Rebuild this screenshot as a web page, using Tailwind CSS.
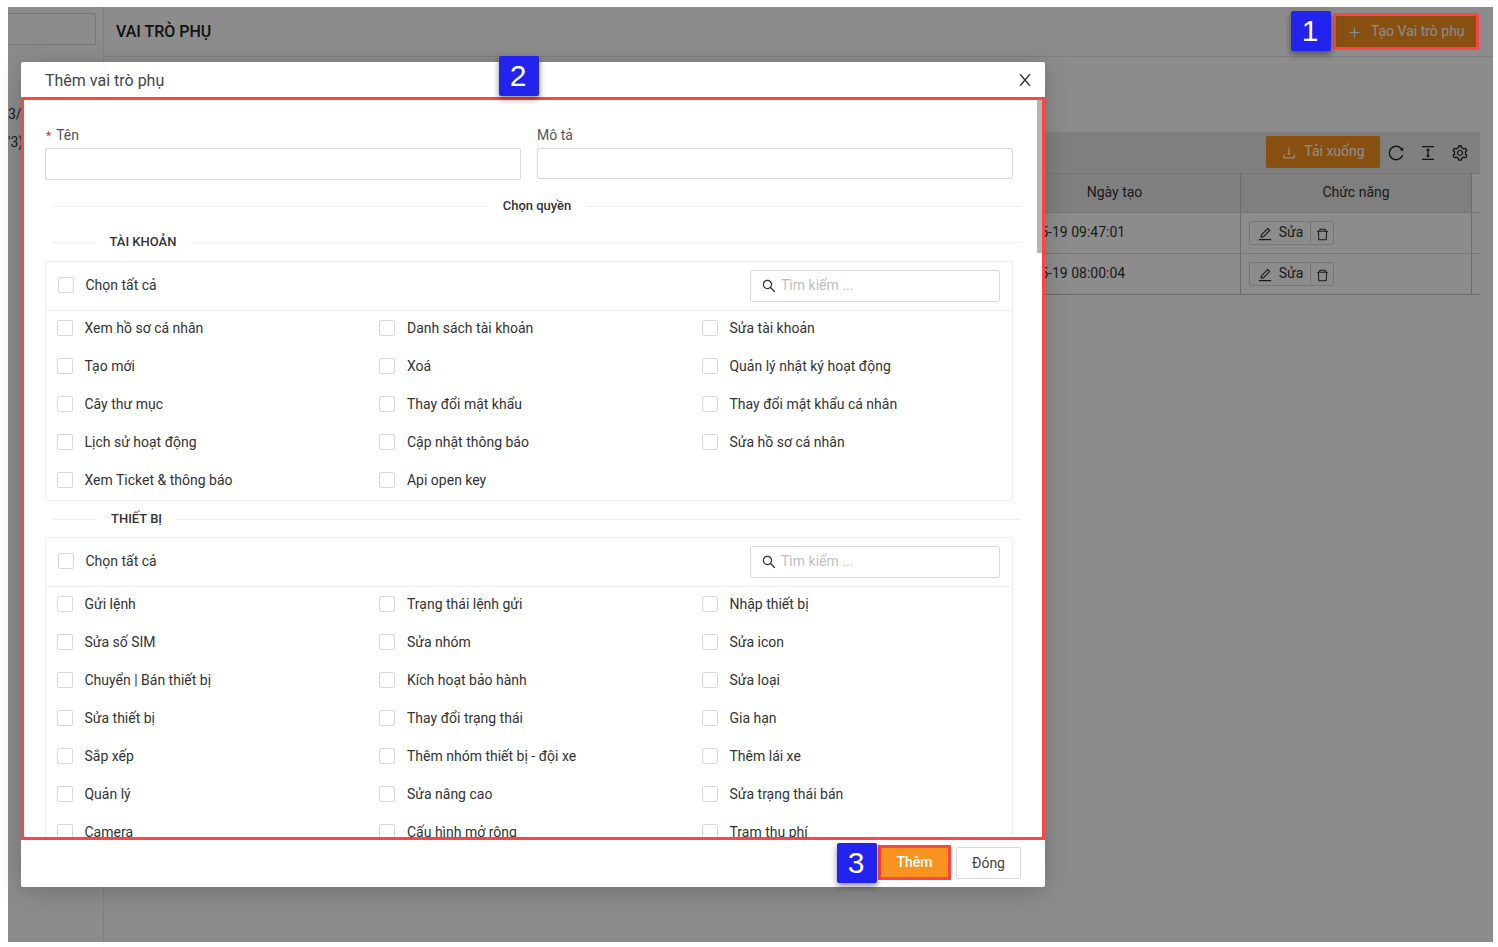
<!DOCTYPE html>
<html lang="vi">
<head>
<meta charset="utf-8">
<title>Vai trò phụ</title>
<script src="https://cdn.jsdelivr.net/npm/@tailwindcss/browser@4"></script>
</head>
<body class="bg-white font-['Roboto',sans-serif] text-[14px] text-[#333]">
<div class="relative w-[1498px] h-[947px] overflow-hidden">
  <!-- page behind -->
  <div class="absolute left-[8px] top-[7px] w-[1485px] h-[935px] bg-white flex overflow-hidden">
    <aside class="w-[96px] shrink-0 border-r border-[#e8e8e8] relative">
      <div class="h-[32px] mt-[6px] w-[88px] border border-[#d9d9d9] border-l-0 rounded-r-[2px]"></div>
      <div class="mt-[55px] h-[28px] leading-[28px] text-[#333] whitespace-nowrap">3/</div>
      <div class="h-[28px] leading-[28px] text-[#333] whitespace-nowrap">'3)</div>
    </aside>
    <main class="flex-1 min-w-0">
      <header class="h-[50px] border-b border-[#e8e8e8] flex items-center justify-between pl-[12px] pr-[14px]">
        <h1 class="text-[16px] font-medium text-[#222]">VAI TRÒ PHỤ</h1>
        <button class="w-[146px] h-[37px] bg-[#f7931e] text-white flex items-center justify-center gap-[8.5px] text-[14px]">
          <svg class="w-[15px] h-[15px] mt-[1px]" viewBox="0 0 1024 1024" fill="currentColor"><path d="M482 152h60q8 0 8 8v704q0 8-8 8h-60q-8 0-8-8V160q0-8 8-8z"/><path d="M176 474h672q8 0 8 8v60q0 8-8 8H176q-8 0-8-8v-60q0-8 8-8z"/></svg>
          <span>Tạo Vai trò phụ</span>
        </button>
      </header>
      <section class="ml-[16px] mr-[13px] mt-[75px]">
        <div class="h-[41px] bg-[#e7e7e7] flex items-center justify-end pr-[11px] pb-[1px]">
          <button class="w-[114px] h-[32px] -mt-[1px] bg-[#f7931e] text-white rounded-[2px] flex items-center justify-center gap-[7px] mr-[7px]">
            <svg class="w-[16px] h-[16px] mt-[2px]" viewBox="0 0 1024 1024" fill="currentColor"><path d="M505.7 661a8 8 0 0 0 12.6 0l112-141.7c4.1-5.2.4-12.9-6.3-12.9h-74.1V168c0-4.4-3.6-8-8-8h-60c-4.4 0-8 3.6-8 8v338.3H400c-6.7 0-10.4 7.7-6.3 12.9l112 141.8zM878 626h-60c-4.4 0-8 3.6-8 8v154H214V634c0-4.4-3.6-8-8-8h-60c-4.4 0-8 3.6-8 8v198c0 17.7 14.3 32 32 32h684c17.7 0 32-14.3 32-32V634c0-4.4-3.6-8-8-8z"/></svg>
            <span>Tải xuống</span>
          </button>
          <svg class="w-[18px] h-[18px] mr-[14px] mt-[1px]" viewBox="0 0 1024 1024" fill="#222"><path d="M909.1 209.3l-56.4 44.1C775.8 155.1 656.2 92 521.9 92 290 92 102.3 279.5 102 511.5 101.7 743.7 289.8 932 521.9 932c181.3 0 335.8-115 394.6-276.1 1.5-4.2-.7-8.9-4.9-10.3l-56.7-19.5a8 8 0 0 0-10.1 4.8c-1.8 5-3.8 10-5.9 14.9-17.3 41-42.1 77.8-73.7 109.4A344.77 344.77 0 0 1 655.9 829c-42.3 17.9-87.4 27-133.8 27-46.5 0-91.5-9.1-133.8-27A341.5 341.5 0 0 1 279 755.2a342.16 342.16 0 0 1-73.7-109.4c-17.9-42.4-27-87.4-27-133.9s9.1-91.5 27-133.9c17.3-41 42.1-77.8 73.7-109.4 31.6-31.6 68.4-56.4 109.3-73.8 42.3-17.9 87.4-27 133.8-27 46.5 0 91.5 9.1 133.8 27a341.5 341.5 0 0 1 109.3 73.8c9.9 9.9 19.2 20.4 27.8 31.4l-60.2 47a8 8 0 0 0 3 14.1l175.6 43c5 1.2 9.9-2.6 9.9-7.7l.8-180.9c-.1-6.6-7.8-10.3-13-6.2z"/></svg>
          <svg class="w-[18px] h-[18px] mr-[14px] mt-[1px]" viewBox="0 0 1024 1024" fill="#222"><path d="M840 836H184c-4.4 0-8 3.6-8 8v60c0 4.4 3.6 8 8 8h656c4.4 0 8-3.6 8-8v-60c0-4.4-3.6-8-8-8zm0-724H184c-4.4 0-8 3.6-8 8v60c0 4.4 3.6 8 8 8h656c4.4 0 8-3.6 8-8v-60c0-4.4-3.6-8-8-8zM610.8 378c6 0 9.4-7 5.7-11.7L515.7 238.7a7.14 7.14 0 0 0-11.3 0L403.6 366.3a7.23 7.23 0 0 0 5.7 11.7H476v268h-62.8c-6 0-9.4 7-5.7 11.7l100.8 127.5c2.9 3.7 8.5 3.7 11.3 0l100.8-127.5c3.7-4.7.4-11.7-5.7-11.7H548V378h62.8z"/></svg>
          <svg class="w-[18px] h-[18px] mt-[1px]" viewBox="0 0 1024 1024" fill="#222"><path d="M924.8 625.7l-65.5-56c3.1-19 4.7-38.4 4.7-57.8s-1.6-38.8-4.7-57.8l65.5-56a32.03 32.03 0 0 0 9.3-35.2l-.9-2.6a443.74 443.74 0 0 0-79.7-137.9l-1.8-2.1a32.12 32.12 0 0 0-35.1-9.5l-81.3 28.9c-30-24.6-63.5-44-99.7-57.6l-15.7-85a32.05 32.05 0 0 0-25.8-25.7l-2.7-.5c-52.1-9.4-106.9-9.4-159 0l-2.7.5a32.05 32.05 0 0 0-25.8 25.7l-15.8 85.4a351.86 351.86 0 0 0-99 57.4l-81.9-29.1a32 32 0 0 0-35.1 9.5l-1.8 2.1a446.02 446.02 0 0 0-79.7 137.9l-.9 2.6c-4.5 12.5-.8 26.5 9.3 35.2l66.3 56.6c-3.1 18.8-4.6 38-4.6 57.1 0 19.2 1.5 38.4 4.6 57.1L99 625.5a32.03 32.03 0 0 0-9.3 35.2l.9 2.6c18.1 50.4 44.9 96.9 79.7 137.9l1.8 2.1a32.12 32.12 0 0 0 35.1 9.5l81.9-29.1c29.8 24.5 63.1 43.9 99 57.4l15.8 85.4a32.05 32.05 0 0 0 25.8 25.7l2.7.5a449.4 449.4 0 0 0 159 0l2.7-.5a32.05 32.05 0 0 0 25.8-25.7l15.7-85a350 350 0 0 0 99.7-57.6l81.3 28.9a32 32 0 0 0 35.1-9.5l1.8-2.1c34.8-41.1 61.6-87.5 79.7-137.9l.9-2.6c4.5-12.3.8-26.3-9.3-35zM788.3 465.9c2.5 15.1 3.8 30.6 3.8 46.1s-1.3 31-3.8 46.1l-6.6 40.1 74.7 63.9a370.03 370.03 0 0 1-42.6 73.6L721 702.8l-31.4 25.8c-23.9 19.6-50.5 35-79.3 45.8l-38.1 14.3-17.9 97a377.5 377.5 0 0 1-85 0l-17.9-97.2-37.8-14.5c-28.5-10.8-55-26.2-78.7-45.7l-31.4-25.9-93.4 33.2c-17-22.9-31.2-47.6-42.6-73.6l75.5-64.5-6.5-40c-2.4-14.9-3.7-30.3-3.7-45.5 0-15.3 1.2-30.6 3.7-45.5l6.5-40-75.5-64.5c11.3-26.1 25.6-50.7 42.6-73.6l93.4 33.2 31.4-25.9c23.7-19.5 50.2-34.9 78.7-45.7l37.9-14.3 17.9-97.2c28.1-3.2 56.8-3.2 85 0l17.9 97 38.1 14.3c28.7 10.8 55.4 26.2 79.3 45.8l31.4 25.8 92.8-32.9c17 22.9 31.2 47.6 42.6 73.6L781.8 426l6.5 39.9zM512 326c-97.2 0-176 78.8-176 176s78.8 176 176 176 176-78.8 176-176-78.8-176-176-176zm79.2 255.2A111.6 111.6 0 0 1 512 614c-29.9 0-58-11.7-79.2-32.8A111.6 111.6 0 0 1 400 502c0-29.9 11.7-58 32.8-79.2C454 401.6 482.1 390 512 390c29.9 0 58 11.6 79.2 32.8A111.6 111.6 0 0 1 624 502c0 29.9-11.7 58-32.8 79.2z"/></svg>
        </div>
        <div class="border-b border-[#c4c4c4]">
          <div class="grid grid-cols-[1fr_252px_231px_8px] h-[40px] border-y border-[#d8d8d8]">
            <div class="bg-[#e7e7e7]"></div>
            <div class="bg-[#e7e7e7] border-r border-[#c4c4c4] flex items-center justify-center text-[#333] pb-[2px]">Ngày tạo</div>
            <div class="bg-[#e7e7e7] border-r border-[#c4c4c4] flex items-center justify-center text-[#333] pb-[2px]">Chức năng</div>
            <div></div>
          </div>
          <div class="grid grid-cols-[1fr_252px_231px_8px] h-[41px] border-b border-[#d8d8d8]">
            <div></div>
            <div class="border-r border-[#c4c4c4] flex items-center pl-[8px] pb-[2px] text-[#333]">2022-05-19 09:47:01</div>
            <div class="border-r border-[#c4c4c4] flex items-center pl-[8px]">
              <div class="flex h-[24px] border border-[#d9d9d9] rounded-[2px]">
                <span class="w-[61px] border-r border-[#d9d9d9] flex items-center justify-center gap-[6px]"><svg class="w-[16px] h-[16px] mt-[2px]" viewBox="0 0 1024 1024" fill="#333"><path d="M257.7 752c2 0 4-.2 6-.5L431.9 722c2-.4 3.9-1.3 5.3-2.8l423.9-423.9a9.96 9.96 0 0 0 0-14.1L694.9 114.9c-1.9-1.9-4.4-2.9-7.1-2.9s-5.2 1-7.1 2.9L256.8 538.8c-1.5 1.5-2.4 3.3-2.8 5.3l-29.5 168.2a33.5 33.5 0 0 0 9.4 29.8c6.6 6.4 14.9 9.9 23.8 9.9zm67.4-174.4L687.8 215l73.3 73.3-362.7 362.6-88.9 15.7 15.6-89zM880 836H144c-17.7 0-32 14.3-32 32v36c0 4.4 3.6 8 8 8h784c4.4 0 8-3.6 8-8v-36c0-17.7-14.3-32-32-32z"/></svg><span class="-mt-[1px]">Sửa</span></span>
                <span class="w-[22px] flex items-center justify-center"><svg class="w-[15px] h-[15px] mt-[2px]" viewBox="0 0 1024 1024" fill="#333"><path d="M360 184h-8c4.4 0 8-3.6 8-8v8h304v-8c0 4.4 3.6 8 8 8h-8v72h72v-80c0-35.3-28.7-64-64-64H352c-35.3 0-64 28.7-64 64v80h72v-72zm504 72H160c-17.7 0-32 14.3-32 32v32c0 4.4 3.6 8 8 8h60.4l24.7 523c1.6 34.1 29.8 61 63.9 61h454c34.2 0 62.3-26.8 63.9-61l24.7-523H888c4.4 0 8-3.6 8-8v-32c0-17.7-14.3-32-32-32zM731.3 840H292.7l-24.2-512h487l-24.2 512z"/></svg></span>
              </div>
            </div>
            <div></div>
          </div>
          <div class="grid grid-cols-[1fr_252px_231px_8px] h-[40px]">
            <div></div>
            <div class="border-r border-[#c4c4c4] flex items-center pl-[8px] pb-[2px] text-[#333]">2022-05-19 08:00:04</div>
            <div class="border-r border-[#c4c4c4] flex items-center pl-[8px]">
              <div class="flex h-[24px] border border-[#d9d9d9] rounded-[2px]">
                <span class="w-[61px] border-r border-[#d9d9d9] flex items-center justify-center gap-[6px]"><svg class="w-[16px] h-[16px] mt-[2px]" viewBox="0 0 1024 1024" fill="#333"><path d="M257.7 752c2 0 4-.2 6-.5L431.9 722c2-.4 3.9-1.3 5.3-2.8l423.9-423.9a9.96 9.96 0 0 0 0-14.1L694.9 114.9c-1.9-1.9-4.4-2.9-7.1-2.9s-5.2 1-7.1 2.9L256.8 538.8c-1.5 1.5-2.4 3.3-2.8 5.3l-29.5 168.2a33.5 33.5 0 0 0 9.4 29.8c6.6 6.4 14.9 9.9 23.8 9.9zm67.4-174.4L687.8 215l73.3 73.3-362.7 362.6-88.9 15.7 15.6-89zM880 836H144c-17.7 0-32 14.3-32 32v36c0 4.4 3.6 8 8 8h784c4.4 0 8-3.6 8-8v-36c0-17.7-14.3-32-32-32z"/></svg><span class="-mt-[1px]">Sửa</span></span>
                <span class="w-[22px] flex items-center justify-center"><svg class="w-[15px] h-[15px] mt-[2px]" viewBox="0 0 1024 1024" fill="#333"><path d="M360 184h-8c4.4 0 8-3.6 8-8v8h304v-8c0 4.4 3.6 8 8 8h-8v72h72v-80c0-35.3-28.7-64-64-64H352c-35.3 0-64 28.7-64 64v80h72v-72zm504 72H160c-17.7 0-32 14.3-32 32v32c0 4.4 3.6 8 8 8h60.4l24.7 523c1.6 34.1 29.8 61 63.9 61h454c34.2 0 62.3-26.8 63.9-61l24.7-523H888c4.4 0 8-3.6 8-8v-32c0-17.7-14.3-32-32-32zM731.3 840H292.7l-24.2-512h487l-24.2 512z"/></svg></span>
              </div>
            </div>
            <div></div>
          </div>
        </div>
      </section>
    </main>
    <div class="absolute inset-0 bg-black/45"></div>
  </div>

  <!-- modal -->
  <div class="absolute left-[21px] top-[62px] w-[1024px] h-[825px] bg-white rounded-[2px] flex flex-col shadow-[0_4px_24px_rgba(0,0,0,0.2)]">
    <div class="h-[35px] shrink-0 pl-[24px] pr-[11px] flex items-center justify-between">
      <h2 class="text-[16px] text-[#444] mt-[2px]">Thêm vai trò phụ</h2>
      <svg class="w-[18px] h-[18px] mt-[1px]" viewBox="0 0 1024 1024" fill="#333"><path d="M563.8 512l262.5-312.9c4.4-5.2.7-13.1-6.1-13.1h-79.8c-4.7 0-9.2 2.1-12.3 5.7L511.6 449.8 295.1 191.7c-3-3.6-7.5-5.7-12.3-5.7H203c-6.8 0-10.5 7.9-6.1 13.1L459.4 512 196.9 824.9A7.95 7.95 0 0 0 203 838h79.8c4.7 0 9.2-2.1 12.3-5.7l216.5-258.1 216.5 258.1c3 3.6 7.5 5.7 12.3 5.7h79.8c6.8 0 10.5-7.9 6.1-13.1L563.8 512z"/></svg>
    </div>
    <div class="relative h-[743px] shrink-0 overflow-hidden">
      <div class="absolute right-[2px] top-[3px] w-[6px] h-[153px] bg-[#b5b5b5]"></div>
      <div class="pl-[24px] pt-[27px]">
        <div class="grid grid-cols-[476px_476px] gap-x-[16px] text-[#555]">
          <div>
            <div class="h-[24px] leading-[22px]"><span class="text-[#f5222d] text-[12px] mr-[5px] ml-[1px]">*</span>Tên</div>
            <div class="h-[32px] border border-[#d9d9d9] rounded-[2px]"></div>
          </div>
          <div>
            <div class="h-[24px] leading-[22px]">Mô tả</div>
            <div class="h-[31px] border border-[#d9d9d9] rounded-[2px]"></div>
          </div>
        </div>
        <div class="mt-[16px] ml-[8px] w-[968px] h-[20px] flex items-center gap-[16px]">
          <div class="flex-1 h-px bg-[#efefef]"></div>
          <div class="text-[13px] font-medium text-[#333]">Chọn quyền</div>
          <div class="flex-1 h-px bg-[#efefef]"></div>
        </div>

        <div class="mt-[16px] ml-[8px] w-[968px] h-[20px] flex items-center gap-[13.5px]">
          <div class="w-[43px] h-px bg-[#efefef]"></div>
          <div class="text-[13px] font-medium text-[#333]">TÀI KHOẢN</div>
          <div class="flex-1 h-px bg-[#efefef]"></div>
        </div>
        <div class="mt-[9px] w-[968px] border border-[#eeeeee] rounded-[2px] pb-[3px]">
          <div class="h-[49px] border-b border-[#eeeeee] flex items-center justify-between pl-[12px] pr-[12px]">
            <label class="flex items-center gap-[11.5px] -mt-[3px]"><span class="w-[16px] h-[16px] border border-[#d9d9d9] rounded-[2px]"></span><span class="mt-[2px]">Chọn tất cả</span></label>
            <div class="w-[250px] h-[32px] border border-[#d9d9d9] rounded-[2px] flex items-center pl-[10px] gap-[4px] text-[#bfbfbf]">
              <svg class="w-[16px] h-[16px]" viewBox="0 0 1024 1024" fill="#333"><path d="M909.6 854.5L649.9 594.8C690.2 542.7 712 479 712 412c0-80.2-31.3-155.4-87.9-212.1-56.6-56.7-132-87.9-212.1-87.9s-155.5 31.3-212.1 87.9C143.2 256.5 112 331.8 112 412c0 80.1 31.3 155.5 87.9 212.1C256.5 680.8 331.8 712 412 712c67 0 130.6-21.8 182.7-62l259.7 259.6a8.2 8.2 0 0 0 11.6 0l43.6-43.5a8.2 8.2 0 0 0 0-11.6zM570.4 570.4C528 612.7 471.8 636 412 636s-116-23.3-158.4-65.6C211.3 528 188 471.8 188 412s23.3-116 65.6-158.4C296 211.3 352.2 188 412 188s116 23.2 158.4 65.6S636 352.2 636 412s-23.3 116-65.6 158.4z"/></svg>
              <span class="-mt-[2px]">Tìm kiếm ...</span>
            </div>
          </div>
          <div class="grid grid-cols-[322.5px_322.5px_1fr] gap-y-[4px] pl-[10.8px]">
            <label class="h-[34px] flex items-center gap-[11.7px]"><span class="w-[16px] h-[16px] border border-[#d9d9d9] rounded-[2px]"></span><span>Xem hồ sơ cá nhân</span></label>
            <label class="h-[34px] flex items-center gap-[11.7px]"><span class="w-[16px] h-[16px] border border-[#d9d9d9] rounded-[2px]"></span><span>Danh sách tài khoản</span></label>
            <label class="h-[34px] flex items-center gap-[11.7px]"><span class="w-[16px] h-[16px] border border-[#d9d9d9] rounded-[2px]"></span><span>Sửa tài khoản</span></label>
            <label class="h-[34px] flex items-center gap-[11.7px]"><span class="w-[16px] h-[16px] border border-[#d9d9d9] rounded-[2px]"></span><span>Tạo mới</span></label>
            <label class="h-[34px] flex items-center gap-[11.7px]"><span class="w-[16px] h-[16px] border border-[#d9d9d9] rounded-[2px]"></span><span>Xoá</span></label>
            <label class="h-[34px] flex items-center gap-[11.7px]"><span class="w-[16px] h-[16px] border border-[#d9d9d9] rounded-[2px]"></span><span>Quản lý nhật ký hoạt động</span></label>
            <label class="h-[34px] flex items-center gap-[11.7px]"><span class="w-[16px] h-[16px] border border-[#d9d9d9] rounded-[2px]"></span><span>Cây thư mục</span></label>
            <label class="h-[34px] flex items-center gap-[11.7px]"><span class="w-[16px] h-[16px] border border-[#d9d9d9] rounded-[2px]"></span><span>Thay đổi mật khẩu</span></label>
            <label class="h-[34px] flex items-center gap-[11.7px]"><span class="w-[16px] h-[16px] border border-[#d9d9d9] rounded-[2px]"></span><span>Thay đổi mật khẩu cá nhân</span></label>
            <label class="h-[34px] flex items-center gap-[11.7px]"><span class="w-[16px] h-[16px] border border-[#d9d9d9] rounded-[2px]"></span><span>Lịch sử hoạt động</span></label>
            <label class="h-[34px] flex items-center gap-[11.7px]"><span class="w-[16px] h-[16px] border border-[#d9d9d9] rounded-[2px]"></span><span>Cập nhật thông báo</span></label>
            <label class="h-[34px] flex items-center gap-[11.7px]"><span class="w-[16px] h-[16px] border border-[#d9d9d9] rounded-[2px]"></span><span>Sửa hồ sơ cá nhân</span></label>
            <label class="h-[34px] flex items-center gap-[11.7px]"><span class="w-[16px] h-[16px] border border-[#d9d9d9] rounded-[2px]"></span><span>Xem Ticket &amp; thông báo</span></label>
            <label class="h-[34px] flex items-center gap-[11.7px]"><span class="w-[16px] h-[16px] border border-[#d9d9d9] rounded-[2px]"></span><span>Api open key</span></label>
          </div>
        </div>

        <div class="mt-[8px] ml-[8px] w-[968px] h-[20px] flex items-center gap-[14px]">
          <div class="w-[44px] h-px bg-[#efefef]"></div>
          <div class="text-[13px] font-medium text-[#333]">THIẾT BỊ</div>
          <div class="flex-1 h-px bg-[#efefef]"></div>
        </div>
        <div class="mt-[8px] w-[968px] border border-[#eeeeee] rounded-[2px] pb-[3px]">
          <div class="h-[49px] border-b border-[#eeeeee] flex items-center justify-between pl-[12px] pr-[12px]">
            <label class="flex items-center gap-[11.5px] -mt-[3px]"><span class="w-[16px] h-[16px] border border-[#d9d9d9] rounded-[2px]"></span><span class="mt-[2px]">Chọn tất cả</span></label>
            <div class="w-[250px] h-[32px] border border-[#d9d9d9] rounded-[2px] flex items-center pl-[10px] gap-[4px] text-[#bfbfbf]">
              <svg class="w-[16px] h-[16px]" viewBox="0 0 1024 1024" fill="#333"><path d="M909.6 854.5L649.9 594.8C690.2 542.7 712 479 712 412c0-80.2-31.3-155.4-87.9-212.1-56.6-56.7-132-87.9-212.1-87.9s-155.5 31.3-212.1 87.9C143.2 256.5 112 331.8 112 412c0 80.1 31.3 155.5 87.9 212.1C256.5 680.8 331.8 712 412 712c67 0 130.6-21.8 182.7-62l259.7 259.6a8.2 8.2 0 0 0 11.6 0l43.6-43.5a8.2 8.2 0 0 0 0-11.6zM570.4 570.4C528 612.7 471.8 636 412 636s-116-23.3-158.4-65.6C211.3 528 188 471.8 188 412s23.3-116 65.6-158.4C296 211.3 352.2 188 412 188s116 23.2 158.4 65.6S636 352.2 636 412s-23.3 116-65.6 158.4z"/></svg>
              <span class="-mt-[2px]">Tìm kiếm ...</span>
            </div>
          </div>
          <div class="grid grid-cols-[322.5px_322.5px_1fr] gap-y-[4px] pl-[10.8px]">
            <label class="h-[34px] flex items-center gap-[11.7px]"><span class="w-[16px] h-[16px] border border-[#d9d9d9] rounded-[2px]"></span><span>Gửi lệnh</span></label>
            <label class="h-[34px] flex items-center gap-[11.7px]"><span class="w-[16px] h-[16px] border border-[#d9d9d9] rounded-[2px]"></span><span>Trạng thái lệnh gửi</span></label>
            <label class="h-[34px] flex items-center gap-[11.7px]"><span class="w-[16px] h-[16px] border border-[#d9d9d9] rounded-[2px]"></span><span>Nhập thiết bị</span></label>
            <label class="h-[34px] flex items-center gap-[11.7px]"><span class="w-[16px] h-[16px] border border-[#d9d9d9] rounded-[2px]"></span><span>Sửa số SIM</span></label>
            <label class="h-[34px] flex items-center gap-[11.7px]"><span class="w-[16px] h-[16px] border border-[#d9d9d9] rounded-[2px]"></span><span>Sửa nhóm</span></label>
            <label class="h-[34px] flex items-center gap-[11.7px]"><span class="w-[16px] h-[16px] border border-[#d9d9d9] rounded-[2px]"></span><span>Sửa icon</span></label>
            <label class="h-[34px] flex items-center gap-[11.7px]"><span class="w-[16px] h-[16px] border border-[#d9d9d9] rounded-[2px]"></span><span>Chuyển | Bán thiết bị</span></label>
            <label class="h-[34px] flex items-center gap-[11.7px]"><span class="w-[16px] h-[16px] border border-[#d9d9d9] rounded-[2px]"></span><span>Kích hoạt bảo hành</span></label>
            <label class="h-[34px] flex items-center gap-[11.7px]"><span class="w-[16px] h-[16px] border border-[#d9d9d9] rounded-[2px]"></span><span>Sửa loại</span></label>
            <label class="h-[34px] flex items-center gap-[11.7px]"><span class="w-[16px] h-[16px] border border-[#d9d9d9] rounded-[2px]"></span><span>Sửa thiết bị</span></label>
            <label class="h-[34px] flex items-center gap-[11.7px]"><span class="w-[16px] h-[16px] border border-[#d9d9d9] rounded-[2px]"></span><span>Thay đổi trạng thái</span></label>
            <label class="h-[34px] flex items-center gap-[11.7px]"><span class="w-[16px] h-[16px] border border-[#d9d9d9] rounded-[2px]"></span><span>Gia hạn</span></label>
            <label class="h-[34px] flex items-center gap-[11.7px]"><span class="w-[16px] h-[16px] border border-[#d9d9d9] rounded-[2px]"></span><span>Sắp xếp</span></label>
            <label class="h-[34px] flex items-center gap-[11.7px]"><span class="w-[16px] h-[16px] border border-[#d9d9d9] rounded-[2px]"></span><span>Thêm nhóm thiết bị - đội xe</span></label>
            <label class="h-[34px] flex items-center gap-[11.7px]"><span class="w-[16px] h-[16px] border border-[#d9d9d9] rounded-[2px]"></span><span>Thêm lái xe</span></label>
            <label class="h-[34px] flex items-center gap-[11.7px]"><span class="w-[16px] h-[16px] border border-[#d9d9d9] rounded-[2px]"></span><span>Quản lý</span></label>
            <label class="h-[34px] flex items-center gap-[11.7px]"><span class="w-[16px] h-[16px] border border-[#d9d9d9] rounded-[2px]"></span><span>Sửa nâng cao</span></label>
            <label class="h-[34px] flex items-center gap-[11.7px]"><span class="w-[16px] h-[16px] border border-[#d9d9d9] rounded-[2px]"></span><span>Sửa trạng thái bán</span></label>
            <label class="h-[34px] flex items-center gap-[11.7px]"><span class="w-[16px] h-[16px] border border-[#d9d9d9] rounded-[2px]"></span><span>Camera</span></label>
            <label class="h-[34px] flex items-center gap-[11.7px]"><span class="w-[16px] h-[16px] border border-[#d9d9d9] rounded-[2px]"></span><span>Cấu hình mở rộng</span></label>
            <label class="h-[34px] flex items-center gap-[11.7px]"><span class="w-[16px] h-[16px] border border-[#d9d9d9] rounded-[2px]"></span><span>Trạm thu phí</span></label>
          </div>
        </div>
      </div>
      <div class="absolute inset-0 border-[3px] border-[#ff4444] pointer-events-none"></div>
    </div>
    <div class="flex-1 flex items-center justify-end gap-[5px] pr-[24px]">
      <button class="w-[73px] h-[35px] -mt-[2px] bg-[#f7931e] border-[3px] border-[#ff4444] text-white font-medium">Thêm</button>
      <button class="w-[65px] h-[32px] -mt-[1px] border border-[#d9d9d9] rounded-[2px] text-[#444]">Đóng</button>
    </div>
  </div>

  <!-- annotations -->
  <div class="absolute left-[1333px] top-[13px] w-[146px] h-[37px] border-[3px] border-[#ff4444]"></div>
  <div class="absolute left-[1291px] top-[11px] w-[40px] h-[40px] pr-[2px] bg-[#2323f0] rounded-[2px] shadow-[0_3px_6px_rgba(0,0,0,0.45)] text-white text-[30px] leading-[40px] text-center font-['Liberation_Sans',sans-serif]">1</div>
  <div class="absolute left-[499px] top-[56px] w-[40px] h-[40px] pr-[2px] bg-[#2323f0] rounded-[2px] shadow-[0_3px_6px_rgba(0,0,0,0.45)] text-white text-[30px] leading-[40px] text-center font-['Liberation_Sans',sans-serif]">2</div>
  <div class="absolute left-[837px] top-[843px] w-[40px] h-[40px] pr-[2px] bg-[#2323f0] rounded-[2px] shadow-[0_3px_6px_rgba(0,0,0,0.45)] text-white text-[30px] leading-[40px] text-center font-['Liberation_Sans',sans-serif]">3</div>
</div>
</body>
</html>
